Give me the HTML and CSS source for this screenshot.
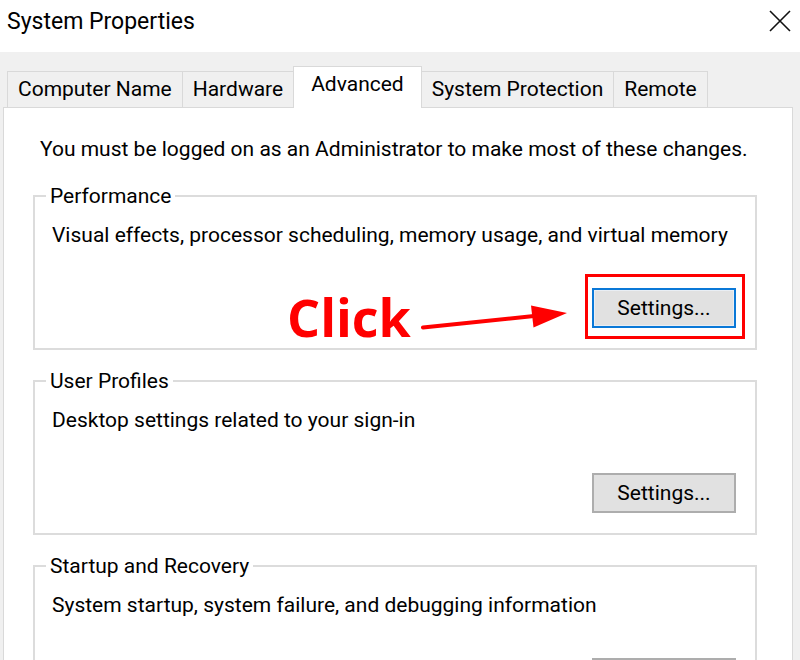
FILE: index.html
```html
<!DOCTYPE html>
<html>
<head>
<meta charset="UTF-8">
<title>System Properties</title>
<link rel="stylesheet" href="styles.css">
</head>
<body>

<div class="titlebar">
  <span class="title">System Properties</span>
  <svg class="close" width="22" height="22" viewBox="0 0 22 22">
    <path d="M1 1L21 21M21 1L1 21" stroke="#111" stroke-width="1.6" fill="none"/>
  </svg>
</div>

<div class="dialog">
  <div class="tabs">
    <div class="tab">Computer Name</div>
    <div class="tab">Hardware</div>
    <div class="tab active">Advanced</div>
    <div class="tab">System Protection</div>
    <div class="tab">Remote</div>
  </div>

  <div class="panel">
    <p class="intro">You must be logged on as an Administrator to make most of these changes.</p>

    <fieldset class="group">
      <legend>Performance</legend>
      <p class="desc">Visual effects, processor scheduling, memory usage, and virtual memory</p>
      <div class="btn-wrap">
        <button class="btn focused">Settings...</button>
        <!-- annotation drawn over the screenshot -->
        <span class="highlight"></span>
        <span class="click">Click</span>
        <svg class="arrow" width="150" height="32" viewBox="0 0 150 32">
          <path d="M3 27.5L114 16" stroke="#f00" stroke-width="4" stroke-linecap="round" fill="none"/>
          <polygon points="147,13 111,5.5 113.5,27.5" fill="#f00"/>
        </svg>
      </div>
    </fieldset>

    <fieldset class="group">
      <legend>User Profiles</legend>
      <p class="desc">Desktop settings related to your sign-in</p>
      <div class="btn-wrap">
        <button class="btn">Settings...</button>
      </div>
    </fieldset>

    <fieldset class="group">
      <legend>Startup and Recovery</legend>
      <p class="desc">System startup, system failure, and debugging information</p>
      <div class="btn-wrap">
        <button class="btn">Settings...</button>
      </div>
    </fieldset>
  </div>
</div>

</body>
</html>
```

FILE: styles.css
```css
  html, body {
    margin: 0;
    width: 800px;
    height: 660px;
    overflow: hidden;
  }
  body {
    font-family: Roboto, 'Liberation Sans', sans-serif;
    font-size: 21px;
    color: #000;
    background-color: #f0f0f0;
  }

  .titlebar {
    height: 52px;
    box-sizing: border-box;
    padding: 8px 9px 0 7px;
    display: flex;
    justify-content: space-between;
    align-items: flex-start;
    background-color: #fff;
  }
  .title {
    font-size: 23px;
    line-height: 27px;
  }
  .close {
    margin-top: 2px;
  }

  .dialog {
    padding: 14px 7px 0 3px;
  }
  .tabs {
    display: flex;
    align-items: flex-end;
    padding-left: 4px;
  }
  .tab {
    height: 36px;
    box-sizing: border-box;
    padding: 0 10px;
    line-height: 35px;
    border: 1px solid #d9d9d9;
    border-bottom: none;
    background-color: #f0f0f0;
    white-space: nowrap;
  }
  .tab + .tab {
    margin-left: -1px;
  }
  .tab.active {
    position: relative;
    z-index: 1;
    height: 42px;
    margin-bottom: -1px;
    padding: 0 17px 6px;
    background-color: #fff;
  }

  .panel {
    height: 560px;
    box-sizing: border-box;
    padding: 29px 35px 0 29px;
    border: 1px solid #d9d9d9;
    background-color: #fff;
  }
  .intro {
    margin: 0 0 23px 7px;
    line-height: 24px;
  }

  .group {
    margin: 0 0 19px 0;
    padding: 15px 19px 20px 17px;
    border: 2px solid #dcdcdc;
    min-width: 0;
  }
  .group legend {
    padding: 0 4px;
    margin-left: -6px;
    line-height: 24px;
  }
  .desc {
    margin: 0;
    line-height: 24px;
    white-space: nowrap;
  }

  .btn-wrap {
    position: relative;
    width: 144px;
    height: 40px;
    margin: 41px 0 0 auto;
  }
  .btn {
    width: 100%;
    height: 100%;
    font-family: Roboto, 'Liberation Sans', sans-serif;
    font-size: 21px;
    color: #000;
    background-color: #e1e1e1;
    border: 2px solid #adadad;
    padding: 0;
  }
  .btn.focused {
    border-color: #0a78d7;
    box-shadow: inset 0 0 0 1px #e9eef4;
  }

  .highlight {
    position: absolute;
    top: -14px;
    left: -7px;
    width: 160px;
    height: 65px;
    box-sizing: border-box;
    border: 3px solid #f00;
  }
  .click {
    position: absolute;
    top: 2px;
    left: -305px;
    font-family: 'Open Sans', sans-serif;
    font-weight: bold;
    font-size: 52px;
    line-height: 53px;
    color: #f00;
  }
  .arrow {
    position: absolute;
    top: 12px;
    left: -172px;
  }
```
